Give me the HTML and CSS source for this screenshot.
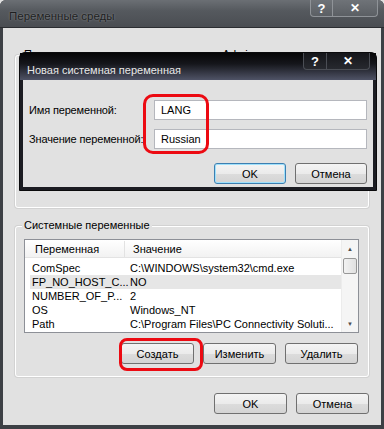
FILE: index.html
```html
<!DOCTYPE html>
<html lang="ru">
<head>
    <meta charset="UTF-8">
    <title>Переменные среды</title>
    <link rel="stylesheet" href="styles.css">
</head>
<body>

<div class="window">
    <!-- Заголовок окна -->
    <div class="titlebar">
        <span class="title">Переменные среды</span>
        <div class="caption-btns">
            <span class="cbtn help">?</span>
            <span class="cbtn close">✕</span>
        </div>
    </div>

    <div class="client">
        <div class="group user-group">
            <span class="legend">Переменные среды пользователя для Admin</span>
        </div>

        <div class="group sys-group">
            <span class="legend">Системные переменные</span>
            <div class="listview">
                <div class="lv-main">
                    <div class="lv-head">
                        <span class="h1">Переменная</span>
                        <span class="h2">Значение</span>
                    </div>
                    <div class="row"><span class="c1">ComSpec</span><span class="c2">C:\WINDOWS\system32\cmd.exe</span></div>
                    <div class="row selected"><span class="c1">FP_NO_HOST_C...</span><span class="c2">NO</span></div>
                    <div class="row"><span class="c1">NUMBER_OF_P...</span><span class="c2">2</span></div>
                    <div class="row"><span class="c1">OS</span><span class="c2">Windows_NT</span></div>
                    <div class="row"><span class="c1">Path</span><span class="c2">C:\Program Files\PC Connectivity Soluti...</span></div>
                </div>
                <div class="scrollbar">
                    <span class="arrow">▲</span>
                    <span class="thumb"></span>
                    <span class="track"></span>
                    <span class="arrow">▼</span>
                </div>
            </div>
            <div class="btn-row">
                <button>Создать</button>
                <button>Изменить</button>
                <button>Удалить</button>
            </div>
        </div>

        <div class="btn-row bottom">
            <button>OK</button>
            <button>Отмена</button>
        </div>
    </div>

    <!-- Диалог поверх окна -->
    <div class="dialog">
        <div class="dlg-title">
            <span class="title">Новая системная переменная</span>
            <div class="caption-btns">
                <span class="cbtn help">?</span>
                <span class="cbtn close">✕</span>
            </div>
        </div>
        <div class="dlg-body">
            <div class="field">
                <label>Имя переменной:</label>
                <input type="text" value="LANG">
            </div>
            <div class="field">
                <label>Значение переменной:</label>
                <input type="text" value="Russian">
            </div>
            <div class="btn-row">
                <button class="focused">OK</button>
                <button>Отмена</button>
            </div>
        </div>
    </div>

    <div class="mark mark-inputs"></div>
    <div class="mark mark-create"></div>
</div>

</body>
</html>
```

FILE: styles.css
```css
* {
    margin: 0;
    padding: 0;
    box-sizing: border-box;
}

body {
    font-family: 'Liberation Sans', Arial, sans-serif;
    font-size: 11px;
    color: #000;
    background: #e1e1e1;
}

.window {
    position: relative;
    width: 384px;
    height: 429px;
    display: flex;
    flex-direction: column;
    background: #3d4045;
    border-radius: 6px 6px 0 0;
    overflow: hidden;
}

.titlebar {
    height: 28px;
    display: flex;
    justify-content: space-between;
    background: linear-gradient(#6b6f74, #55595e 40%, #4a4d52);
    border-bottom: 1px solid #2b2d31;
}

.titlebar .title {
    padding: 10px 0 0 9px;
    font-size: 11.5px;
    color: #1e1f21;
    text-shadow: 0 0 2px #8d9095;
}

.caption-btns {
    display: flex;
    margin-right: 6px;
}

.cbtn {
    height: 17px;
    display: flex;
    justify-content: center;
    align-items: center;
    color: #fff;
    font-weight: bold;
    font-size: 13px;
    background: linear-gradient(#6f7378, #5b5f64);
    border: 1px solid #8f9398;
    border-top: none;
}

.cbtn.help {
    width: 23px;
    border-radius: 0 0 0 4px;
}

.cbtn.close {
    width: 45px;
    border-left: none;
    border-radius: 0 0 4px 0;
    font-size: 12px;
}

.client {
    height: 397px;
    margin: 0 3px;
    background: #e1e1e1;
    padding: 27px 12px 0 12px;
}

.group {
    position: relative;
    border: 1px solid #fff;
    box-shadow: 0 0 0 1px #d2d2d2;
    border-radius: 3px;
}

.legend {
    position: absolute;
    top: -8px;
    left: 6px;
    padding: 0 2px;
    background: #e1e1e1;
}

.user-group {
    height: 153px;
}

.sys-group {
    margin-top: 18px;
    height: 151px;
    padding: 12px 9px 0 8px;
}

.listview {
    height: 94px;
    display: flex;
    border: 1px solid #8d9097;
    background: #fff;
}

.lv-main {
    flex: 1;
}

.lv-head {
    height: 18px;
    display: flex;
    align-items: center;
    background: linear-gradient(#fff, #f2f2f2);
    border-bottom: 1px solid #e3e3e3;
    margin-bottom: 3px;
}

.lv-head .h1 {
    width: 100px;
    padding-left: 10px;
    border-right: 1px solid #e2e2e2;
    line-height: 16px;
}

.lv-head .h2 {
    padding-left: 8px;
}

.row {
    height: 14px;
    display: flex;
    align-items: center;
    margin-left: 5px;
    padding-left: 2px;
}

.row.selected {
    background: #e6e6e6;
}

.row .c1 {
    width: 98px;
}

.scrollbar {
    width: 17px;
    display: flex;
    flex-direction: column;
    background: #f5f5f5;
    border-left: 1px solid #ececec;
}

.scrollbar .arrow {
    height: 17px;
    display: flex;
    justify-content: center;
    align-items: center;
    font-size: 6px;
    color: #4d4d4d;
}

.scrollbar .thumb {
    height: 16px;
    margin: 1px 1px 0 1px;
    border: 1px solid #979797;
    border-radius: 2px;
    background: linear-gradient(90deg, #f2f2f2, #e0e0e0);
}

.scrollbar .track {
    flex: 1;
}

.btn-row {
    display: flex;
    justify-content: flex-end;
    gap: 9px;
}

.sys-group .btn-row {
    margin-top: 10px;
    padding-right: 1px;
}

.btn-row.bottom {
    margin-top: 16px;
}

button {
    width: 73px;
    height: 21px;
    font-family: inherit;
    font-size: 11px;
    color: #000;
    border: 1px solid #707070;
    border-radius: 3px;
    background: linear-gradient(#f4f4f4, #ebebeb 50%, #dcdcdc 51%, #d4d4d4);
}

button.focused {
    border-color: #3c7fb1;
    box-shadow: inset 0 0 0 1px #9fe0fb;
}

/* Диалог "Новая системная переменная" */
.dialog {
    position: absolute;
    left: 19px;
    top: 52px;
    width: 358px;
    height: 139px;
    display: flex;
    flex-direction: column;
    background: #1b1c22;
    border-radius: 6px 6px 0 0;
    border: 1px solid #0a0a0c;
}

.dlg-title {
    height: 27px;
    display: flex;
    justify-content: space-between;
    background: linear-gradient(#050506, #15161b 40%, #4f5366);
}

.dlg-title .title {
    padding: 11px 0 0 7px;
    font-size: 11px;
    color: #e8e8e8;
}

.dlg-title .caption-btns {
    margin-right: 6px;
}

.dlg-title .cbtn {
    height: 17px;
    background: linear-gradient(#15161a, #27292f);
    border-color: #4b4e55;
}

.dlg-title .cbtn.help {
    width: 24px;
}

.dlg-title .cbtn.close {
    width: 43px;
}

.dlg-body {
    flex: 1;
    margin: 0 3px 3px 3px;
    background: #e1e1e1;
    padding: 20px 6px 0 6px;
    display: flex;
    flex-direction: column;
    gap: 9px;
}

.field {
    display: flex;
    align-items: center;
    height: 20px;
}

.field label {
    width: 125px;
    white-space: nowrap;
    letter-spacing: -0.15px;
}

.field input {
    flex: 1;
    height: 20px;
    border: 1px solid #b5b7bd;
    padding: 0 6px;
    font-family: inherit;
    font-size: 11px;
    background: #fff;
    outline: none;
}

.dlg-body .btn-row {
    margin-top: 5px;
}

.dlg-body button {
    width: 72px;
}

/* Красные выделения */
.mark {
    position: absolute;
    border: 3px solid #ec0a12;
    border-radius: 10px;
}

.mark-inputs {
    left: 143px;
    top: 94px;
    width: 66px;
    height: 60px;
}

.mark-create {
    left: 119px;
    top: 338px;
    width: 84px;
    height: 33px;
    border-radius: 8px;
}
```
